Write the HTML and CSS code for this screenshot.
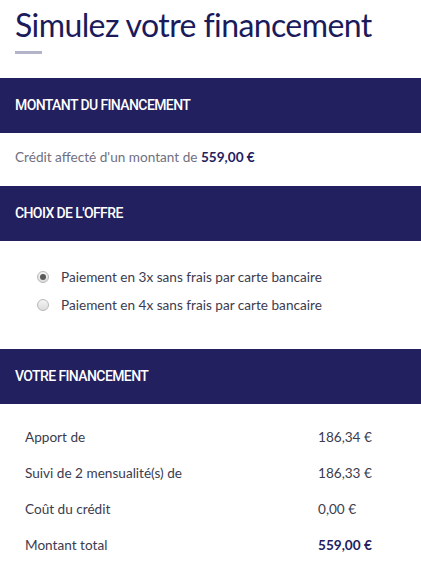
FILE: index.html
```html
<!DOCTYPE html>
<html lang="fr">
<head>
  <meta charset="UTF-8">
  <meta name="viewport" content="width=device-width, initial-scale=1.0">
  <title>Simulez votre financement</title>
  <link rel="stylesheet" href="styles.css">
</head>
<body>
  <div class="page">
    <h1 class="title">Simulez votre financement</h1>
    <div class="title-bar"></div>

    <div class="section-head">Montant du financement</div>
    <p class="amount">Crédit affecté d'un montant de <strong>559,00 €</strong></p>

    <div class="section-head">Choix de l'offre</div>
    <div class="offers">
      <label class="offer">
        <input type="radio" name="offer" value="3x" checked>
        <span>Paiement en 3x sans frais par carte bancaire</span>
      </label>
      <label class="offer">
        <input type="radio" name="offer" value="4x">
        <span>Paiement en 4x sans frais par carte bancaire</span>
      </label>
    </div>

    <div class="section-head">Votre financement</div>
    <table class="summary">
      <tr>
        <td>Apport de</td>
        <td class="value">186,34 €</td>
      </tr>
      <tr>
        <td>Suivi de 2 mensualité(s) de</td>
        <td class="value">186,33 €</td>
      </tr>
      <tr>
        <td>Coût du crédit</td>
        <td class="value">0,00 €</td>
      </tr>
      <tr>
        <td>Montant total</td>
        <td class="value total">559,00 €</td>
      </tr>
    </table>
  </div>
</body>
</html>
```

FILE: styles.css
```css
body {
  font-family: Lato, "Liberation Sans", sans-serif;
  background-color: #ffffff;
  color: #3c3c4e;
  margin: 0;
}
.page {
  width: 421px;
}
.title {
  font-size: 32px;
  font-weight: 400;
  letter-spacing: -0.6px;
  font-variant-ligatures: none;
  color: #1b1b5c;
  margin: 0;
  padding: 5px 15px 0;
  line-height: 40px;
  white-space: nowrap;
}
.title-bar {
  width: 27px;
  height: 3px;
  background-color: #b3b3c9;
  margin: 6px 0 24px 15px;
}
.section-head {
  height: 55px;
  line-height: 55px;
  padding: 0 15px;
  background-color: #23205f;
  color: #ffffff;
  font-family: Roboto, "Liberation Sans", sans-serif;
  font-size: 14px;
  font-weight: 500;
  letter-spacing: -0.6px;
  text-transform: uppercase;
}
.amount {
  margin: 0;
  padding: 0 15px;
  height: 53px;
  line-height: 49px;
  font-size: 13.6px;
  color: #707080;
}
.amount strong {
  color: #23205f;
  font-weight: 700;
}
.offers {
  padding: 22px 0 30px 37px;
}
.offer {
  display: flex;
  align-items: center;
  height: 28px;
  font-size: 13.6px;
  color: #3c3c4e;
}
.offer input {
  appearance: none;
  width: 12px;
  height: 12px;
  margin: 0 12px 0 0;
  border: 1px solid #b8b8b8;
  border-radius: 50%;
  background: linear-gradient(#f4f4f4, #dcdcdc);
  position: relative;
}
.offer input:checked::after {
  content: "";
  position: absolute;
  left: 2px;
  top: 2px;
  width: 6px;
  height: 6px;
  border-radius: 50%;
  background-color: #5a5a5a;
}
.summary {
  width: 100%;
  border-collapse: collapse;
  margin-top: 15px;
  font-size: 13.6px;
  color: #3c3c4e;
}
.summary td {
  height: 36px;
  padding: 0 0 0 25px;
}
.summary .value {
  width: 103px;
  padding-left: 0;
}
.summary .total {
  color: #23205f;
  font-weight: 700;
}
```
